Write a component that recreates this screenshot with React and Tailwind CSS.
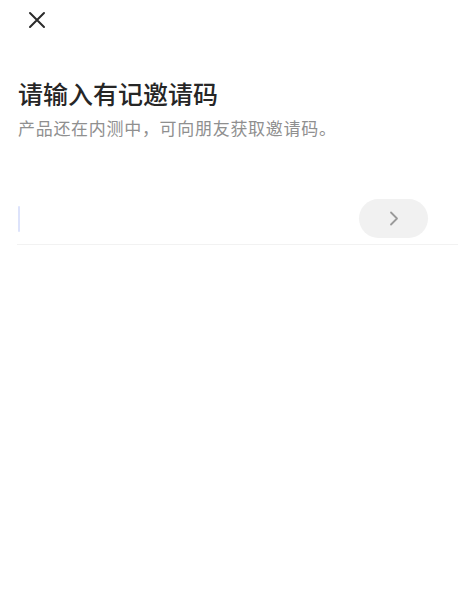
import React from 'react';

export default function App() {
  return (
    <div
      className="min-h-[590px] w-full bg-white"
      style={{ fontFamily: '"Noto Sans CJK SC", "Noto Sans", sans-serif' }}
    >
      {/* Top bar */}
      <div className="flex h-[40px] items-center pl-[25px]">
        <button className="flex h-[24px] w-[24px] items-center justify-center text-[#2b2b2b]">
          <svg width="18" height="18" viewBox="0 0 18 18" fill="none" stroke="currentColor" strokeWidth="2" strokeLinecap="round">
            <path d="M2 2L16 16M16 2L2 16" />
          </svg>
        </button>
      </div>

      {/* Heading */}
      <div className="px-[18px] pt-[36px]">
        <h1 className="text-[25px] leading-[34px] font-medium text-[#262626]">请输入有记邀请码</h1>
        <p className="mt-[5px] text-[17px] leading-[26px] tracking-[0.7px] text-[#8f8f8f]">产品还在内测中，可向朋友获取邀请码。</p>
      </div>

      {/* Input row */}
      <div className="mx-[17px] mt-[58px] mr-[16px] flex items-center border-b border-[#f2f2f2] pb-[6px]">
        <div className="flex flex-1 items-center pl-[1px]">
          <span className="h-[26px] w-[2px] rounded-full bg-[#dde3fb]" />
        </div>
        <button className="mr-[30px] flex h-[39px] w-[69px] items-center justify-center rounded-full bg-[#f1f1f1]">
          <svg width="10" height="15" viewBox="0 0 10 15" fill="none" stroke="#9a9a9a" strokeWidth="1.8" strokeLinecap="round" strokeLinejoin="round">
            <path d="M2 1.5L8 7.5L2 13.5" />
          </svg>
        </button>
      </div>
    </div>
  );
}
